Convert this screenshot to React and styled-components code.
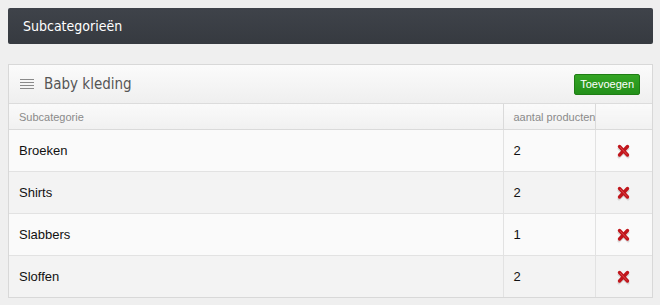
import React from "react";
import styled, { createGlobalStyle } from "styled-components";

const Global = createGlobalStyle`
  html, body { margin: 0; padding: 0; }
  body {
    background: #efefef;
    font-family: "Liberation Sans", Arial, sans-serif;
  }
`;

const Page = styled.div`
  padding: 8px 7px 8px 8px;
  display: flex;
  flex-direction: column;
  gap: 20px;
  width: 645px;
`;

const TitleBar = styled.div`
  height: 36px;
  background: linear-gradient(#3f434a, #363a40);
  border-radius: 2px;
  display: flex;
  align-items: center;
  padding-left: 15px;
  color: #fff;
  font-family: "DejaVu Sans", sans-serif;
  font-stretch: condensed;
  font-size: 14px;
`;

const Panel = styled.div`
  border: 1px solid #d8d8d8;
  background: #fafafa;
`;

const PanelHead = styled.div`
  height: 38px;
  display: flex;
  align-items: center;
  padding: 0 12px 0 11px;
  background: linear-gradient(#fbfbfb, #efefef);
  border-bottom: 1px solid #dcdcdc;
  gap: 10px;
`;

const PanelTitle = styled.div`
  flex: 1;
  color: #555;
  font-family: "DejaVu Sans", sans-serif;
  font-stretch: condensed;
  font-size: 15px;
`;

const AddButton = styled.button`
  height: 21px;
  padding: 0 5px;
  border: 1px solid #1f7d14;
  border-radius: 2px;
  background: linear-gradient(#34a524, #23901a);
  color: #fff;
  font-family: "Liberation Sans", Arial, sans-serif;
  font-size: 11px;
  cursor: pointer;
`;

const Table = styled.table`
  width: 643px;
  border-collapse: collapse;
  table-layout: fixed;
`;

const Col = styled.col`
  width: ${(p) => p.$w}px;
`;

const Th = styled.th`
  height: 25px;
  text-align: left;
  font-weight: normal;
  font-size: 11px;
  color: #8a8a8a;
  padding: 0 0 0 10px;
  background: linear-gradient(#fafafa, #f1f1f1);
  border-bottom: 1px solid #dadada;
  border-left: ${(p) => (p.$first ? "none" : "1px solid #dadada")};
  white-space: nowrap;
  overflow: hidden;
`;

const Tr = styled.tr`
  background: ${(p) => (p.$alt ? "#f3f3f3" : "#fafafa")};
`;

const Td = styled.td`
  height: 41px;
  padding: 0 0 0 10px;
  font-size: 13px;
  color: #111;
  border-bottom: ${(p) => (p.$last ? "none" : "1px solid #e2e2e2")};
  border-left: ${(p) => (p.$first ? "none" : "1px solid #e2e2e2")};
  text-align: ${(p) => (p.$center ? "center" : "left")};
  ${(p) => (p.$center ? "padding: 0;" : "")}
`;

const MenuIcon = () => (
  <svg width="14" height="10" viewBox="0 0 14 10">
    {[0.5, 3.5, 6.5, 9.5].map((y) => (
      <line key={y} x1="0" x2="14" y1={y} y2={y} stroke="#8a8a8a" strokeWidth="1" />
    ))}
  </svg>
);

const DeleteIcon = () => (
  <svg width="15" height="15" viewBox="0 0 15 15" style={{ verticalAlign: "middle" }}>
    <line x1="3" y1="4.5" x2="12" y2="13" stroke="#bbb" strokeWidth="3" strokeLinecap="round" opacity="0.5" />
    <line x1="12" y1="4.5" x2="3" y2="13" stroke="#bbb" strokeWidth="3" strokeLinecap="round" opacity="0.5" />
    <line x1="3.5" y1="2.5" x2="11.5" y2="11" stroke="#c0161c" strokeWidth="3.4" strokeLinecap="round" />
    <line x1="11.5" y1="2.5" x2="3.5" y2="11" stroke="#c0161c" strokeWidth="3.4" strokeLinecap="round" />
    <line x1="4.3" y1="3.3" x2="10.7" y2="10.2" stroke="#de4a4e" strokeWidth="0.9" strokeLinecap="round" />
  </svg>
);

const rows = [
  { name: "Broeken", count: 2 },
  { name: "Shirts", count: 2 },
  { name: "Slabbers", count: 1 },
  { name: "Sloffen", count: 2 },
];

export default function App() {
  return (
    <>
      <Global />
      <Page>
        <TitleBar>Subcategorieën</TitleBar>
        <Panel>
          <PanelHead>
            <MenuIcon />
            <PanelTitle>Baby kleding</PanelTitle>
            <AddButton>Toevoegen</AddButton>
          </PanelHead>
          <Table>
            <colgroup>
              <Col $w={494} />
              <Col $w={92} />
              <Col $w={57} />
            </colgroup>
            <thead>
              <tr>
                <Th $first>Subcategorie</Th>
                <Th>aantal producten</Th>
                <Th></Th>
              </tr>
            </thead>
            <tbody>
              {rows.map((r, i) => (
                <Tr key={r.name} $alt={i % 2 === 1}>
                  <Td $first $last={i === rows.length - 1}>{r.name}</Td>
                  <Td $last={i === rows.length - 1}>{r.count}</Td>
                  <Td $center $last={i === rows.length - 1}>
                    <DeleteIcon />
                  </Td>
                </Tr>
              ))}
            </tbody>
          </Table>
        </Panel>
      </Page>
    </>
  );
}
